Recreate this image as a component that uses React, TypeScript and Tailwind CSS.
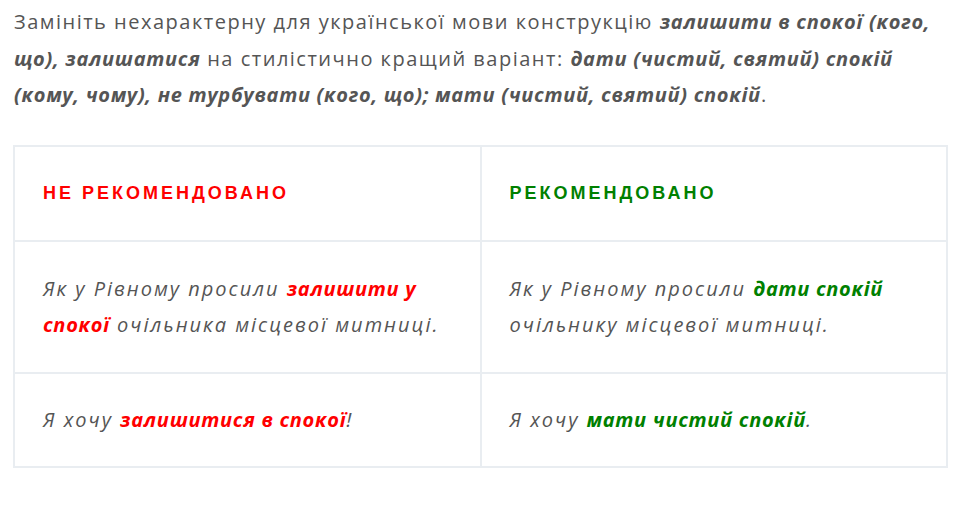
const BAD = 'font-bold tracking-[0.7px] text-[#ff0000]'
const GOOD = 'font-bold tracking-[0.7px] text-[#008000]'

export default function App() {
  return (
    <div
      className="bg-white px-[13px] pt-[4px] text-[#555555]"
      style={{ fontFamily: '"Open Sans", sans-serif' }}
    >
      <p className="ml-px text-[20px] leading-[36.5px] tracking-[1.5px]">
        Замініть нехарактерну для української мови конструкцію{' '}
        <em className="font-bold tracking-[0.7px]">залишити в спокої (кого, що), залишатися</em>{' '}
        на стилістично кращий варіант:{' '}
        <em className="font-bold tracking-[0.7px]">
          дати (чистий, святий) спокій (кому, чому), не турбувати (кого, що); мати (чистий, святий) спокій
        </em>
        .
      </p>

      <table className="mt-[31px] w-[935px] table-fixed border-collapse">
        <thead>
          <tr>
            {[
              ['НЕ РЕКОМЕНДОВАНО', 'text-[#ff0000]'],
              ['РЕКОМЕНДОВАНО', 'text-[#008000]'],
            ].map(([label, color]) => (
              <th
                key={label}
                className={`h-[95px] border-2 border-[#e9edf1] px-[28px] text-left align-middle text-[18px] font-bold tracking-[3px] ${color}`}
                style={{ fontFamily: '"Liberation Sans", Arial, sans-serif' }}
              >
                {label}
              </th>
            ))}
          </tr>
        </thead>
        <tbody className="text-[20px] italic leading-[36px] tracking-[2px]">
          <tr>
            <td className="h-[132px] border-2 border-[#e9edf1] px-[28px] align-middle">
              Як у Рівному просили <span className={BAD}>залишити у спокої</span> очільника
              місцевої митниці.
            </td>
            <td className="h-[132px] border-2 border-[#e9edf1] px-[28px] align-middle">
              Як у Рівному просили <span className={GOOD}>дати спокій</span> очільнику місцевої
              митниці.
            </td>
          </tr>
          <tr>
            <td className="h-[94px] border-2 border-[#e9edf1] px-[28px] align-middle">
              Я хочу <span className={BAD}>залишитися в спокої</span>!
            </td>
            <td className="h-[94px] border-2 border-[#e9edf1] px-[28px] align-middle">
              Я хочу <span className={GOOD}>мати чистий спокій</span>.
            </td>
          </tr>
        </tbody>
      </table>
    </div>
  )
}
